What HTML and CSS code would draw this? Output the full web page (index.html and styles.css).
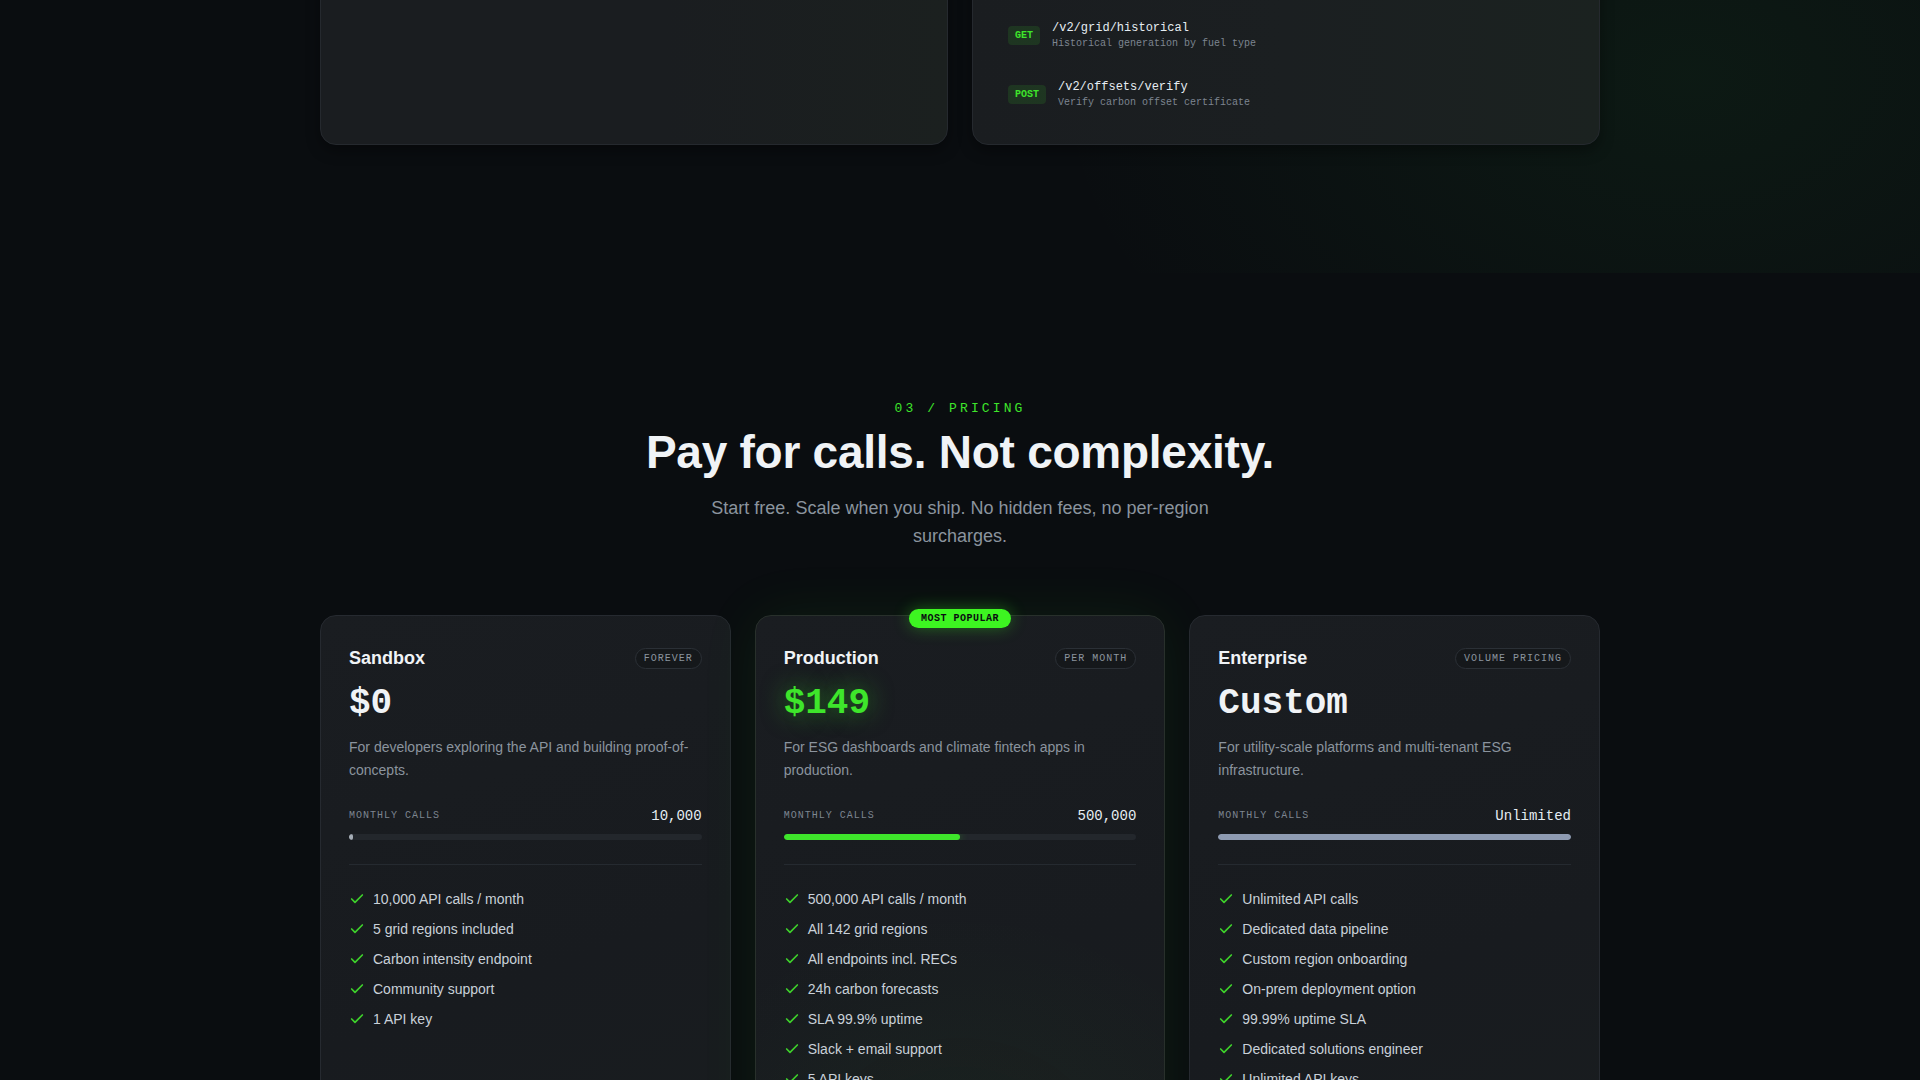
FILE: index.html
```html
<!DOCTYPE html>
<html lang="en">
<head>
<meta charset="utf-8">
<title>Pricing</title>
<link rel="stylesheet" href="styles.css">
</head>
<body>
<section class="api">
  <div class="container api-grid">
    <div class="panel panel-intro">
      <h3 class="panel-title">Real-time grid data</h3>
      <p class="panel-text">Carbon intensity, generation mix and forecasts for every major grid, behind one REST API.</p>
    </div>
    <div class="panel panel-endpoints">
      <div class="ep"><span class="method">GET</span><div class="ep-body"><div class="ep-path">/v2/grid/intensity</div><div class="ep-desc">Live carbon intensity by region</div></div></div>
      <div class="ep"><span class="method">GET</span><div class="ep-body"><div class="ep-path">/v2/grid/forecast</div><div class="ep-desc">24h carbon intensity forecast</div></div></div>
      <div class="ep"><span class="method">GET</span><div class="ep-body"><div class="ep-path">/v2/regions</div><div class="ep-desc">List supported grid regions</div></div></div>
      <div class="ep"><span class="method">GET</span><div class="ep-body"><div class="ep-path">/v2/recs/certificates</div><div class="ep-desc">Renewable energy certificates</div></div></div>
      <div class="ep"><span class="method">GET</span><div class="ep-body"><div class="ep-path">/v2/grid/historical</div><div class="ep-desc">Historical generation by fuel type</div></div></div>
      <div class="ep"><span class="method">POST</span><div class="ep-body"><div class="ep-path">/v2/offsets/verify</div><div class="ep-desc">Verify carbon offset certificate</div></div></div>
    </div>
  </div>
</section>

<section class="pricing">
  <div class="container">
    <p class="eyebrow">03 / PRICING</p>
    <h2 class="title">Pay for calls. Not complexity.</h2>
    <p class="sub">Start free. Scale when you ship. No hidden fees, no per-region surcharges.</p>

    <div class="plans">
      <article class="plan">
        <div class="plan-head"><h3 class="plan-name">Sandbox</h3><span class="tag">FOREVER</span></div>
        <div class="price">$0</div>
        <p class="desc">For developers exploring the API and building proof-of-concepts.</p>
        <div class="meter-row"><span class="meter-label">MONTHLY CALLS</span><span class="meter-value">10,000</span></div>
        <div class="track"><div class="fill fill-muted" style="width:1.2%"></div></div>
        <ul class="features">
          <li><svg class="check" viewBox="0 0 24 24"><path d="M20 6 9 17l-5-5"/></svg>10,000 API calls / month</li>
          <li><svg class="check" viewBox="0 0 24 24"><path d="M20 6 9 17l-5-5"/></svg>5 grid regions included</li>
          <li><svg class="check" viewBox="0 0 24 24"><path d="M20 6 9 17l-5-5"/></svg>Carbon intensity endpoint</li>
          <li><svg class="check" viewBox="0 0 24 24"><path d="M20 6 9 17l-5-5"/></svg>Community support</li>
          <li><svg class="check" viewBox="0 0 24 24"><path d="M20 6 9 17l-5-5"/></svg>1 API key</li>
        </ul>
        <a class="cta" href="#">Start free</a>
      </article>

      <article class="plan plan-featured">
        <span class="popular">MOST POPULAR</span>
        <div class="plan-head"><h3 class="plan-name">Production</h3><span class="tag">PER MONTH</span></div>
        <div class="price price-accent">$149</div>
        <p class="desc">For ESG dashboards and climate fintech apps in production.</p>
        <div class="meter-row"><span class="meter-label">MONTHLY CALLS</span><span class="meter-value">500,000</span></div>
        <div class="track"><div class="fill fill-accent" style="width:50%"></div></div>
        <ul class="features">
          <li><svg class="check" viewBox="0 0 24 24"><path d="M20 6 9 17l-5-5"/></svg>500,000 API calls / month</li>
          <li><svg class="check" viewBox="0 0 24 24"><path d="M20 6 9 17l-5-5"/></svg>All 142 grid regions</li>
          <li><svg class="check" viewBox="0 0 24 24"><path d="M20 6 9 17l-5-5"/></svg>All endpoints incl. RECs</li>
          <li><svg class="check" viewBox="0 0 24 24"><path d="M20 6 9 17l-5-5"/></svg>24h carbon forecasts</li>
          <li><svg class="check" viewBox="0 0 24 24"><path d="M20 6 9 17l-5-5"/></svg>SLA 99.9% uptime</li>
          <li><svg class="check" viewBox="0 0 24 24"><path d="M20 6 9 17l-5-5"/></svg>Slack + email support</li>
          <li><svg class="check" viewBox="0 0 24 24"><path d="M20 6 9 17l-5-5"/></svg>5 API keys</li>
        </ul>
        <a class="cta cta-accent" href="#">Get API key</a>
      </article>

      <article class="plan">
        <div class="plan-head"><h3 class="plan-name">Enterprise</h3><span class="tag">VOLUME PRICING</span></div>
        <div class="price">Custom</div>
        <p class="desc">For utility-scale platforms and multi-tenant ESG infrastructure.</p>
        <div class="meter-row"><span class="meter-label">MONTHLY CALLS</span><span class="meter-value">Unlimited</span></div>
        <div class="track"><div class="fill fill-slate" style="width:100%"></div></div>
        <ul class="features">
          <li><svg class="check" viewBox="0 0 24 24"><path d="M20 6 9 17l-5-5"/></svg>Unlimited API calls</li>
          <li><svg class="check" viewBox="0 0 24 24"><path d="M20 6 9 17l-5-5"/></svg>Dedicated data pipeline</li>
          <li><svg class="check" viewBox="0 0 24 24"><path d="M20 6 9 17l-5-5"/></svg>Custom region onboarding</li>
          <li><svg class="check" viewBox="0 0 24 24"><path d="M20 6 9 17l-5-5"/></svg>On-prem deployment option</li>
          <li><svg class="check" viewBox="0 0 24 24"><path d="M20 6 9 17l-5-5"/></svg>99.99% uptime SLA</li>
          <li><svg class="check" viewBox="0 0 24 24"><path d="M20 6 9 17l-5-5"/></svg>Dedicated solutions engineer</li>
          <li><svg class="check" viewBox="0 0 24 24"><path d="M20 6 9 17l-5-5"/></svg>Unlimited API keys</li>
        </ul>
        <a class="cta" href="#">Talk to sales</a>
      </article>
    </div>
  </div>
</section>
</body>
</html>
```

FILE: styles.css
```css
* { box-sizing: border-box; }

html, body { margin: 0; padding: 0; }

body {
  background: #0a0d10;
  color: #e6edf3;
  font-family: "Liberation Sans", Arial, sans-serif;
  overflow: hidden;
}

.container {
  max-width: 1280px;
  margin: 0 auto;
}

/* ---------- API section (scrolled, only bottom visible) ---------- */
.api {
  padding: 0 0 128px;
  background:
    radial-gradient(ellipse 640px 440px at 88% 28%, rgba(46, 190, 70, 0.07), rgba(46, 190, 70, 0) 100%),
    #0a0d10;
  overflow: hidden;
}

.api-grid {
  display: grid;
  grid-template-columns: 1fr 1fr;
  gap: 24px;
  margin-top: -251px;
}

.panel {
  border: 1px solid #25292e;
  border-radius: 16px;
  background: linear-gradient(90deg, #1a1d20 0%, #1a1d20 55%, #1b201f 100%);
  box-shadow: 0 6px 14px rgba(0, 0, 0, 0.35);
}

.panel-intro {
  padding: 32px;
}

.panel-title {
  margin: 0;
  font-size: 20px;
  color: #f0f3f6;
}

.panel-text {
  margin: 10px 0 0;
  font-size: 15px;
  line-height: 24px;
  color: #8b949e;
}

.panel-endpoints {
  padding: 24px;
  display: flex;
  flex-direction: column;
  gap: 8px;
  background: linear-gradient(90deg, #1a1d20 0%, #1b1f21 50%, #1b2220 100%);
}

.ep {
  display: flex;
  align-items: center;
  gap: 12px;
  padding: 10px 11px;
}

.method {
  font: 700 10px/11px "Liberation Mono", monospace;
  padding: 4px 7px;
  border-radius: 4px;
  background: rgba(62, 229, 43, 0.12);
  color: #3ee52b;
}

.ep-path {
  font: 12px/16px "Liberation Mono", monospace;
  color: #e6edf3;
}

.ep-desc {
  margin-top: 1px;
  font: 10px/14px "Liberation Mono", monospace;
  color: #7d8590;
}

/* ---------- Pricing ---------- */
.pricing {
  padding: 128px 0 120px;
}

.eyebrow {
  margin: 0;
  text-align: center;
  font: 13px/16px "Liberation Mono", monospace;
  letter-spacing: 0.24em;
  color: #3ee52b;
}

.title {
  margin: 10px 0 0;
  text-align: center;
  font: 700 46px/1.1 "Liberation Sans", Arial, sans-serif;
  letter-spacing: -0.25px;
  color: #f0f3f6;
}

.sub {
  max-width: 520px;
  margin: 16px auto 0;
  text-align: center;
  font-size: 18px;
  line-height: 1.6;
  color: #8b949e;
}

.plans {
  display: grid;
  grid-template-columns: repeat(3, 1fr);
  gap: 24px;
  margin-top: 64px;
}

.plan {
  position: relative;
  display: flex;
  flex-direction: column;
  padding: 31px 28px 32px;
  border: 1px solid #262a30;
  border-radius: 16px;
  background: linear-gradient(160deg, #1a1d21 0%, #181b1f 60%, #191d1f 100%);
}

.plan-featured {
  border-color: #28302b;
  background:
    radial-gradient(ellipse 300px 260px at 50% 95%, rgba(62, 229, 43, 0.035), rgba(62, 229, 43, 0) 100%),
    linear-gradient(160deg, #1a1d21 0%, #181b1f 60%, #191d1f 100%);
  box-shadow: 0 0 60px rgba(62, 229, 43, 0.08);
}

.popular {
  position: absolute;
  top: -7px;
  left: 50%;
  transform: translateX(-50%);
  padding: 4px 12px;
  border-radius: 999px;
  font: 700 10px/11px "Liberation Mono", monospace;
  letter-spacing: 0.05em;
  white-space: nowrap;
  color: #0a0d10;
  background: #3df521;
  box-shadow: 0 0 16px rgba(61, 245, 33, 0.35);
}

.plan-head {
  display: flex;
  align-items: center;
  justify-content: space-between;
  height: 22px;
}

.plan-name {
  margin: 0;
  font: 700 18px/22px "Liberation Sans", Arial, sans-serif;
  color: #f0f3f6;
}

.tag {
  padding: 4px 8px;
  border: 1px solid #2b3036;
  border-radius: 999px;
  background: #15181b;
  font: 10px/11px "Liberation Mono", monospace;
  letter-spacing: 1px;
  color: #8b949e;
}

.price {
  margin-top: 17px;
  font: 700 36px/1 "Liberation Mono", monospace;
  color: #f0f3f6;
}

.price-accent {
  color: #3ee52b;
  text-shadow: 0 0 24px rgba(62, 229, 43, 0.5);
}

.desc {
  margin: 14px 0 0;
  font-size: 14px;
  line-height: 22.4px;
  color: #8b949e;
}

.meter-row {
  display: flex;
  align-items: center;
  justify-content: space-between;
  height: 18px;
  margin-top: 26px;
}

.meter-label {
  font: 10px/1 "Liberation Mono", monospace;
  letter-spacing: 1px;
  color: #7d8590;
}

.meter-value {
  font: 14px/1 "Liberation Mono", monospace;
  color: #e6edf3;
}

.track {
  height: 6px;
  margin-top: 9px;
  border-radius: 3px;
  background: #23272c;
  overflow: hidden;
}

.fill {
  height: 100%;
  min-width: 4px;
  border-radius: 3px;
}

.fill-muted { background: #a5adb6; }
.fill-accent { background: #3ee52b; box-shadow: 0 0 10px rgba(62, 229, 43, 0.4); }
.fill-slate { background: #8e9bb2; }

.features {
  list-style: none;
  margin: 24px 0 0;
  padding: 24px 0 0;
  border-top: 1px solid #252a30;
  display: flex;
  flex-direction: column;
  gap: 10px;
  flex: 1;
}

.features li {
  display: flex;
  align-items: center;
  gap: 8px;
  font-size: 14px;
  line-height: 20px;
  color: #c9d1d9;
}

.check {
  width: 16px;
  height: 16px;
  flex: none;
  fill: none;
  stroke: #3ed12b;
  stroke-width: 2.5;
  stroke-linecap: round;
  stroke-linejoin: round;
}

.cta {
  display: block;
  margin-top: 32px;
  padding: 13px 0;
  border: 1px solid #2b3036;
  border-radius: 10px;
  text-align: center;
  text-decoration: none;
  font-size: 14px;
  font-weight: 700;
  color: #e6edf3;
}

.cta-accent {
  border-color: #3ee52b;
  background: #3ee52b;
  color: #0a0d10;
}
```
